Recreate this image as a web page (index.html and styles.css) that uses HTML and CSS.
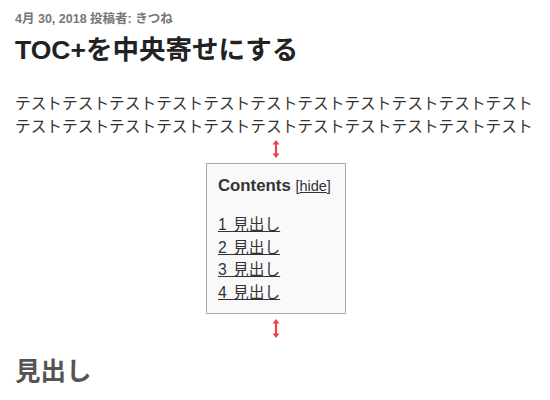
FILE: index.html
```html
<!DOCTYPE html>
<html lang="ja">

<head>
    <meta charset="UTF-8">
    <meta name="viewport" content="width=device-width, initial-scale=1.0">
    <title>TOC+を中央寄せにする</title>
    <link rel="stylesheet" href="styles.css">
</head>

<body>
    <article class="entry">
        <div class="meta">4月 30, 2018 投稿者: きつね</div>
        <h1 class="title">TOC+を中央寄せにする</h1>

        <p class="text">テストテストテストテストテストテストテストテストテストテストテストテストテストテストテストテストテストテストテストテストテストテスト</p>

        <div class="toc-wrap">
            <svg class="arrow arrow-top" width="8" height="18" viewBox="0 0 8 18">
                <path d="M4 2 V16" stroke="#e8424b" stroke-width="2.2" />
                <path d="M0.5 4.5 L4 0 L7.5 4.5 Z M0.5 13.5 L4 18 L7.5 13.5 Z" fill="#e8424b" />
            </svg>

            <div class="toc">
                <p class="toc-title">Contents <span class="toc-toggle">[<a href="#">hide</a>]</span></p>
                <ul class="toc-list">
                    <li><a href="#">1 見出し</a></li>
                    <li><a href="#">2 見出し</a></li>
                    <li><a href="#">3 見出し</a></li>
                    <li><a href="#">4 見出し</a></li>
                </ul>
            </div>

            <svg class="arrow arrow-bottom" width="8" height="19" viewBox="0 0 8 19">
                <path d="M4 2 V17" stroke="#e8424b" stroke-width="2.2" />
                <path d="M0.5 4.5 L4 0 L7.5 4.5 Z M0.5 14.5 L4 19 L7.5 14.5 Z" fill="#e8424b" />
            </svg>
        </div>

        <h2 class="heading">見出し</h2>
    </article>
</body>

</html>
```

FILE: styles.css
```css
* {
    margin: 0;
    padding: 0;
    box-sizing: border-box;
    list-style: none;
}

body {
    background-color: #fff;
    color: #333;
    font-family: "Liberation Sans", "Noto Sans CJK JP", sans-serif;
    overflow: hidden;
}

.entry {
    padding: 12px 15px 0;
}

.meta {
    font-size: 12.5px;
    font-weight: bold;
    line-height: 14px;
    color: #767676;
}

.title {
    margin-top: 8px;
    font-size: 26.5px;
    line-height: 32px;
    font-weight: bold;
    color: #222;
}

.text {
    margin-top: 26px;
    font-size: 15.7px;
    line-height: 23px;
    color: #333;
    word-break: break-all;
}

.toc-wrap {
    display: flex;
    flex-direction: column;
    align-items: center;
    padding-left: 2px;
}

.arrow {
    display: block;
}

.arrow-top {
    margin-top: 2px;
    margin-bottom: 5px;
}

.arrow-bottom {
    margin-top: 5px;
}

.toc {
    width: 140px;
    height: 151px;
    padding: 11px 8px 10px 11px;
    background-color: #f9f9f9;
    border: 1px solid #aaa;
}

.toc-title {
    font-size: 16.8px;
    line-height: 22px;
    font-weight: bold;
    color: #333;
    white-space: nowrap;
}

.toc-toggle {
    font-size: 14.5px;
    font-weight: normal;
}

.toc a {
    color: #333;
    text-decoration: underline;
}

.toc-list {
    margin-top: 17px;
}

.toc-list li {
    font-size: 15.7px;
    line-height: 22.5px;
    word-spacing: 2px;
}

.heading {
    margin-top: 17px;
    font-size: 25.5px;
    line-height: 32px;
    font-weight: bold;
    color: #555;
}
```
